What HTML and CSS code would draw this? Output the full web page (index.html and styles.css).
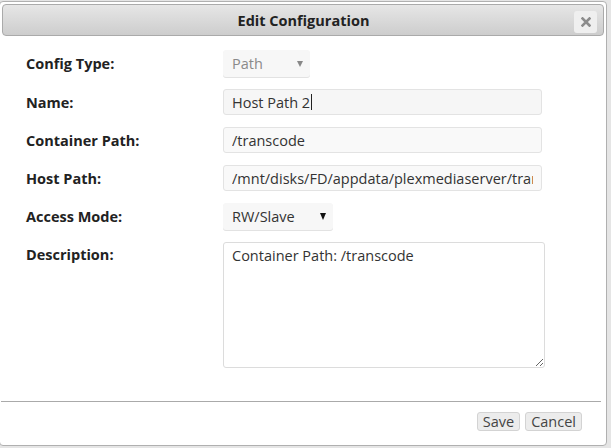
FILE: index.html
```html
<!DOCTYPE html>
<html lang="en">
<head>
    <meta charset="UTF-8">
    <meta name="viewport" content="width=device-width, initial-scale=1.0">
    <title>Edit Configuration</title>
    <link rel="stylesheet" href="styles.css">
</head>
<body>

<div class="dialog">
    <!-- Title bar -->
    <div class="titlebar">
        <span></span>
        <span class="title">Edit Configuration</span>
        <button class="close-btn" title="Close">
            <svg width="10" height="10" viewBox="0 0 10 10">
                <path d="M1.5 1.5 L8.5 8.5 M8.5 1.5 L1.5 8.5" stroke="#8c8c8c" stroke-width="2.6" stroke-linecap="square"/>
            </svg>
        </button>
    </div>

    <!-- Config form -->
    <div class="config-form">
        <div class="form-row">
            <label class="form-label">Config Type:</label>
            <div class="select select-type disabled">
                <span>Path</span>
                <span class="arrow"></span>
            </div>
        </div>

        <div class="form-row">
            <label class="form-label">Name:</label>
            <div class="text-field name-field">Host Path 2<span class="caret"></span></div>
        </div>

        <div class="form-row">
            <label class="form-label">Container Path:</label>
            <input class="text-input" type="text" value="/transcode">
        </div>

        <div class="form-row">
            <label class="form-label">Host Path:</label>
            <input class="text-input" type="text" value="/mnt/disks/FD/appdata/plexmediaserver/transcode">
        </div>

        <div class="form-row">
            <label class="form-label">Access Mode:</label>
            <div class="select select-mode">
                <span>RW/Slave</span>
                <span class="arrow"></span>
            </div>
        </div>

        <div class="form-row top">
            <label class="form-label">Description:</label>
            <textarea class="description">Container Path: /transcode</textarea>
        </div>
    </div>

    <!-- Buttons -->
    <div class="button-pane">
        <button class="pane-btn">Save</button>
        <button class="pane-btn">Cancel</button>
    </div>
</div>

<div class="below">Show docker allocations</div>

</body>
</html>
```

FILE: styles.css
```css
/* General Styles */
body {
    margin: 0;
    background-color: #e5e5e5;
    font-family: "Open Sans", "DejaVu Sans", sans-serif;
    overflow: hidden;
    height: 448px;
}

.dialog {
    box-sizing: border-box;
    width: 608px;
    height: 445px;
    margin-top: 1px;
    margin-left: -1px;
    background-color: #ffffff;
    border: 1px solid #b0b0b0;
    border-radius: 4px;
    padding: 2px 2px 0 1px;
    display: flex;
    flex-direction: column;
}

/* Title bar */
.titlebar {
    box-sizing: border-box;
    height: 32px;
    margin-left: 1px;
    border: 1px solid #aaaaaa;
    border-radius: 4px;
    background: linear-gradient(#e6e6e6, #cdcdcd);
    display: grid;
    grid-template-columns: 1fr auto 1fr;
    align-items: center;
}

.title {
    font-weight: bold;
    font-size: 14.5px;
    color: #222222;
    padding-left: 1px;
}

.close-btn {
    justify-self: end;
    width: 23px;
    height: 22px;
    margin-right: 6px;
    margin-top: 3px;
    border: none;
    border-radius: 3px;
    background-color: #efefef;
    padding: 0;
    display: flex;
    align-items: center;
    justify-content: center;
}

/* Form */
.config-form {
    padding: 14px 0 0 25px;
    display: flex;
    flex-direction: column;
    gap: 12px;
}

.form-row {
    display: flex;
    align-items: center;
}

.form-row.top {
    align-items: flex-start;
}

.form-label {
    width: 197px;
    font-size: 14.5px;
    font-weight: bold;
    color: #222222;
}

.form-row.top .form-label {
    line-height: 26px;
}

.text-input,
.text-field {
    box-sizing: border-box;
    width: 319px;
    height: 26px;
    margin: 0;
    padding: 0 8px;
    border: 1px solid #e3e3e3;
    border-radius: 3px;
    background-color: #f9f9f9;
    font-family: inherit;
    font-size: 14.5px;
    color: #333333;
    outline: none;
}

.text-field {
    display: flex;
    align-items: center;
    background-color: #f6f6f6;
}

.caret {
    display: inline-block;
    width: 1px;
    height: 16px;
    background-color: #222222;
    margin-left: 1px;
}

.select {
    box-sizing: border-box;
    height: 27px;
    padding: 0 9px;
    border-radius: 3px;
    background-color: #f7f7f7;
    box-shadow: 0 1px 0 #e2e2e2;
    display: flex;
    align-items: center;
    justify-content: space-between;
    font-size: 14.5px;
    color: #333333;
}

.select-type {
    width: 87px;
    padding-right: 7px;
}

.select-mode {
    width: 110px;
    padding-right: 7px;
}

.select.disabled {
    color: #8a8a8a;
}

.arrow {
    width: 0;
    height: 0;
    border-left: 3.5px solid transparent;
    border-right: 3.5px solid transparent;
    border-top: 7px solid #111111;
}

.select.disabled .arrow {
    border-top-color: #888888;
    border-left-width: 3px;
    border-right-width: 3px;
    border-top-width: 6px;
}

.description {
    box-sizing: border-box;
    width: 322px;
    height: 126px;
    margin: 0;
    padding: 3px 8px;
    border: 1px solid #dcdcdc;
    border-radius: 3px;
    background-color: #ffffff;
    font-family: inherit;
    font-size: 14.5px;
    color: #333333;
    outline: none;
}

/* Button pane */
.button-pane {
    margin-top: 33px;
    margin-right: 3px;
    border-top: 1px solid #aaaaaa;
    padding: 10px 19px 0 0;
    display: flex;
    justify-content: flex-end;
    gap: 5px;
}

.pane-btn {
    height: 19px;
    padding: 0 5px;
    border: 1px solid #d3d3d3;
    border-radius: 3px;
    background-color: #ececec;
    font-family: inherit;
    font-size: 14.5px;
    line-height: 17px;
    color: #444444;
}

.below {
    padding-left: 90px;
    margin-top: -2px;
    font-size: 11px;
    color: #4a7ab5;
}
```
